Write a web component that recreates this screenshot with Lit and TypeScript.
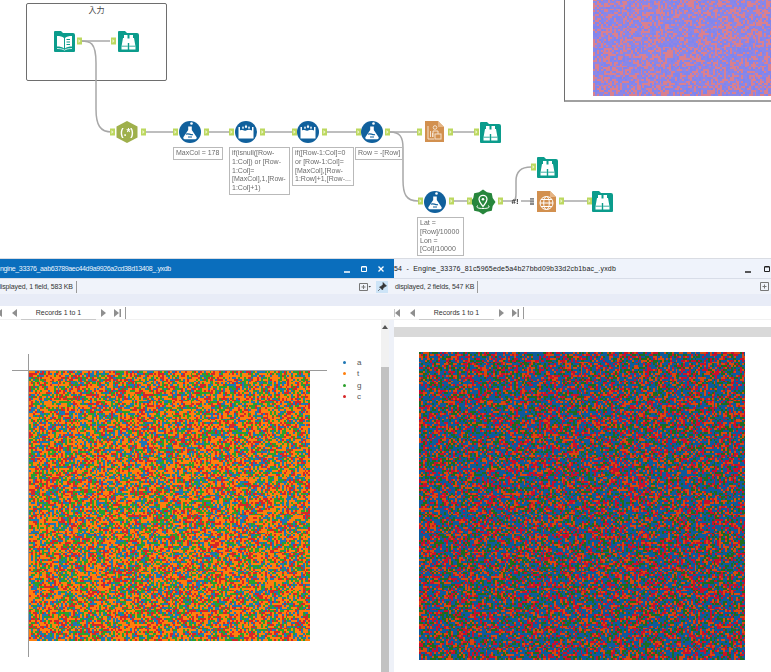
import { LitElement, css, html, svg } from 'lit'
import { customElement, property } from 'lit/decorators.js'

const SANS = '"Liberation Sans", Arial, sans-serif'

// seeded so the noise plots stay the same between runs
function rng(seed: number) {
  let s = seed
  return () => {
    s = (s * 1664525 + 1013904223) >>> 0
    return (s >>> 8) / 16777216
  }
}

@customElement('noise-plot')
class NoisePlot extends LitElement {
  @property({ type: Number }) w = 100
  @property({ type: Number }) h = 100
  @property({ type: Number }) cell = 2
  @property({ type: Number }) seed = 1
  @property({ type: Array }) colors: string[] = []

  static styles = css`
    :host { display: block; line-height: 0; }
    canvas { filter: blur(0.3px); }
  `

  updated() {
    const c = this.renderRoot.querySelector('canvas')!
    const ctx = c.getContext('2d')!
    const r = rng(this.seed)
    const cols = Math.ceil(this.w / this.cell)
    const rows = Math.ceil(this.h / this.cell)
    for (let y = 0; y < rows; y++) {
      for (let x = 0; x < cols; x++) {
        ctx.fillStyle = this.colors[Math.floor(r() * this.colors.length)]
        ctx.fillRect(Math.round(x * this.cell), Math.round(y * this.cell), Math.ceil(this.cell), Math.ceil(this.cell))
      }
    }
  }

  render() {
    return html`<canvas width=${this.w} height=${this.h}></canvas>`
  }
}

const TEAL = '#0b9c8c'
const BLUE = '#10609c'
const ORANGE = '#d2904f'
const FOLDER = 'M1 0h6l2 2h10a2 2 0 0 1 2 2v16a1 1 0 0 1-1 1H1a1 1 0 0 1-1-1V1a1 1 0 0 1 1-1z'

function anchor(x: number, y: number) {
  return svg`<rect x=${x} y=${y - 3.5} width="5" height="7" fill="#bcd85f"/><path d=${`M${x + 1.5} ${y - 2}l2 2-2 2z`} fill="#eef5cc"/>`
}

function book(x: number, y: number) {
  return svg`<g transform=${`translate(${x} ${y})`}>
    <path d=${FOLDER} fill=${TEAL}/>
    <path d="M3 5c3 0 5.500.5 7 2v10.500C8.500 16.200 6 15.600 3 15.600zM18 5c-3 0-5.500.5-7 2v10.500c1.500-1.300 4-1.900 7-1.900z" fill="#fff"/>
    <path d="M3 17.500c3 0 6 .5 7.500 1.700 1.500-1.200 4.500-1.700 7.500-1.700" fill="none" stroke="#fff" stroke-width=".8"/>
    <path d="M12.500 8.500h3.500M12.500 11h3.500M12.500 13.500h3.500" stroke=${TEAL} stroke-width="1.100"/>
  </g>`
}

function browse(x: number, y: number) {
  return svg`<g transform=${`translate(${x} ${y})`}>
    <path d=${FOLDER} fill=${TEAL}/>
    <path d="M6 4h3.500v3.500h2V4H15v3h1l1.500 8.500v3h-6.300V12h-1.400v6.500H3.500v-3L5 7h1z" fill="#fff"/>
    <path d="M3.500 15.200h6.300M11.200 15.200h6.300" stroke=${TEAL} stroke-width=".8"/>
  </g>`
}

function flask(cx: number, cy: number) {
  return svg`<g transform=${`translate(${cx} ${cy})`}>
    <circle r="11" fill=${BLUE}/>
    <circle cx="1.500" cy="-8.500" r="1.300" fill="#fff"/>
    <path d="M-1.800-5.500h3.600v3.500L6.500 5a1.500 1.500 0 0 1-1.300 2.300H-5.200A1.500 1.500 0 0 1-6.500 5L-1.800-2z" fill="#fff"/>
    <path d="M-4 2.200c2-1.500 4 1 7 .5M-2 5h4" stroke=${BLUE} stroke-width="1.200" fill="none"/>
  </g>`
}

function multiRow(cx: number, cy: number) {
  return svg`<g transform=${`translate(${cx} ${cy})`}>
    <circle r="11" fill=${BLUE}/>
    <path d="M-7.500-5h1.500v3.500c2-1.500 4 1 6 0s4-1 6 0V-5h1.500V6.500h-15z" fill="#fff"/>
    <path d="M-3-6l1 2-1 1-1-1zM0-7.500l1.300 2.500-1.300 1.300-1.300-1.300zM3-6l1 2-1 1-1-1z" fill="#fff"/>
  </g>`
}

function regex(cx: number, cy: number) {
  return svg`<g transform=${`translate(${cx} ${cy})`}>
    <path d="M0-11L10.500-5.500V5.500L0 11-10.500 5.500V-5.500z" fill="#9fb04c"/>
    <text y="3.500" text-anchor="middle" font-size="10" font-weight="700" fill="#fff" font-family=${SANS}>(.*)</text>
  </g>`
}

function doc(x: number, y: number, kind: 'report' | 'globe') {
  return svg`<g transform=${`translate(${x} ${y})`}>
    <path d="M0 0h13l6 6v15H0z" fill=${ORANGE}/>
    <path d="M13 0l6 6h-6z" fill="#e6b585"/>
    ${kind === 'globe'
      ? svg`<g fill="none" stroke="#fff" stroke-width="1"><circle cx="9.500" cy="12" r="6.500"/><ellipse cx="9.500" cy="12" rx="2.800" ry="6.500"/><path d="M3 12h13M4 8.500h11M4 15.500h11"/></g>`
      : svg`<g fill="none" stroke="#f4e2cf" stroke-width="1"><path d="M3 5v13h6M5.500 16V10M7.500 16V12"/><circle cx="10" cy="6.500" r="1.800"/><path d="M8 16v-6h5v3"/><rect x="10" y="13" width="6" height="5"/></g>`}
  </g>`
}

function spatial(cx: number, cy: number) {
  const pts: string[] = []
  for (let i = 0; i < 16; i++) {
    const a = (i * Math.PI) / 8
    const r = i % 2 ? 10.5 : 12.5
    pts.push(`${(Math.sin(a) * r).toFixed(1)},${(-Math.cos(a) * r).toFixed(1)}`)
  }
  return svg`<g transform=${`translate(${cx} ${cy})`}>
    <polygon points=${pts.join(' ')} fill="#27863c"/>
    <path d="M0 4.500c-2-3-4-4.800-4-7.200a4 4 0 0 1 8 0c0 2.400-2 4.200-4 7.200z" fill="none" stroke="#fff" stroke-width="1.300"/>
    <circle cy="-2.700" r="1.300" fill="#fff"/>
    <path d="M-5 3.500c-2 1-2 3 5 3s7-2 5-3" fill="none" stroke="#fff" stroke-width="1"/>
  </g>`
}

const WIRES = [
  'M81 41H110',
  'M81 41c9 0 15 1 15 22v46c0 16 4 23 16 23',
  'M146 132H173',
  'M208 132H229',
  'M264 132H293',
  'M326 132H357',
  'M390 132H417',
  'M390 132c10 0 13 5 13 16v32c0 14 3 21 15 21',
  'M453 132H474',
  'M452 201H468',
  'M503 201H513',
  'M513 201c3 0 3-4 3-8v-12c0-9 4-14 15-14',
  'M521 201H530',
  'M564 201H587',
]

const NOTES = [
  { left: 173, top: 147, width: 50, lines: ['MaxCol = 178'] },
  { left: 229, top: 147, width: 61, lines: ['if(isnull([Row-', '1:Col]) or [Row-', '1:Col]=', '[MaxCol],1,[Row-', '1:Col]+1)'] },
  { left: 292, top: 147, width: 62, lines: ['if([Row-1:Col]=0', 'or [Row-1:Col]=', '[MaxCol],[Row-', '1:Row]+1,[Row-...'] },
  { left: 355, top: 147, width: 48, lines: ['Row = -[Row]'] },
  { left: 417, top: 217, width: 47, lines: ['Lat =', '[Row]/10000', 'Lon =', '[Col]/10000'] },
]

@customElement('workflow-canvas')
class WorkflowCanvas extends LitElement {
  static styles = css`
    :host {
      display: block;
      position: relative;
      height: 258px;
      overflow: hidden;
      background: #fff;
    }
    svg.wires { position: absolute; left: 0; top: 0; }
    .container {
      position: absolute;
      left: 26px;
      top: 3px;
      width: 139px;
      height: 76px;
      border: 1px solid #6e6e6e;
      border-radius: 2px;
      text-align: center;
      font: 8px "Noto Sans CJK JP", sans-serif;
      color: #444;
    }
    .preview {
      position: absolute;
      left: 564px;
      top: -2px;
      width: 220px;
      height: 101px;
      border: 1px solid #6e6e6e;
      border-bottom: 2px solid #a0a0a0;
      background: #fff;
    }
    .preview noise-plot { margin-left: 28px; }
    .note {
      position: absolute;
      box-sizing: border-box;
      border: 1px solid #b9b9b9;
      background: #fff;
      padding: 1px 1px 1px 2px;
      font: 7px/8.8px "Liberation Sans", Arial, sans-serif;
      color: #6b6b6b;
      white-space: nowrap;
      overflow: hidden;
    }
    .note div { height: 8.8px; }
  `

  render() {
    return html`
      <div class="container">入力</div>
      <div class="preview">
        <noise-plot .w=${190} .h=${97} .cell=${1.9} .seed=${77} .colors=${['#7f85ee', '#d9808f', '#8488ea', '#d9808f', '#8f85e4']}></noise-plot>
      </div>
      <svg class="wires" width="771" height="258">
        ${WIRES.map((d) => svg`<path d=${d} fill="none" stroke="#a8a8a8" stroke-width="1.5"/>`)}
        ${book(54, 31)} ${browse(118, 31)}
        ${anchor(77, 41)} ${anchor(111, 41)}
        ${regex(127, 132)} ${anchor(110, 132)} ${anchor(141, 132)}
        ${flask(190, 132)} ${anchor(173, 132)} ${anchor(204, 132)}
        ${multiRow(246, 132)} ${anchor(229, 132)} ${anchor(260, 132)}
        ${multiRow(308, 132)} ${anchor(292, 132)} ${anchor(322, 132)}
        ${flask(372, 132)} ${anchor(356, 132)} ${anchor(385, 132)}
        ${doc(425, 121, 'report')} ${anchor(417, 132)} ${anchor(448, 132)}
        ${browse(480, 122)} ${anchor(474, 132)}
        ${flask(435, 202)} ${anchor(418, 201)} ${anchor(449, 201)}
        ${spatial(483, 202)} ${anchor(467, 201)} ${anchor(498, 201)}
        ${browse(537, 157)} ${anchor(531, 167)}
        ${doc(537, 191, 'globe')} ${anchor(559, 201)}
        ${browse(592, 191)} ${anchor(587, 201)}
        <text x="511.500" y="204" font-size="8" font-weight="700" fill="#333" font-family=${SANS}>#!</text>
        <rect x="530" y="198" width="4" height="7" fill="#8a8a8a"/>
        <path d="M530 200h4M530 202.500h4" stroke="#ddd" stroke-width=".6"/>
      </svg>
      ${NOTES.map((n) => html`<div class="note" style="left:${n.left}px;top:${n.top}px;width:${n.width}px">${n.lines.map((l) => html`<div>${l}</div>`)}</div>`)}
    `
  }
}

const ARROW_FIRST = svg`<path d="M1 1h1.500v8H1zM8 1v8L3 5z" fill="#8f8f8f"/>`
const ARROW_PREV = svg`<path d="M8 1v8L3 5z" fill="#8f8f8f"/>`
const ARROW_NEXT = svg`<path d="M2 1v8l5-4z" fill="#8f8f8f"/>`
const ARROW_LAST = svg`<path d="M2 1v8l5-4zM7.500 1H9v8H7.500z" fill="#8f8f8f"/>`

function pager(start: number) {
  const icon = (p: unknown, ml: number) => html`<svg style="margin-left:${ml}px" width="10" height="10" viewBox="0 0 10 10">${p}</svg>`
  return html`<div class="pager">
    ${icon(ARROW_FIRST, start)}
    ${icon(ARROW_PREV, 5)}
    <span class="records">Records 1 to 1</span>
    ${icon(ARROW_NEXT, 3)}
    ${icon(ARROW_LAST, 3)}
    <span class="sep"></span>
  </div>`
}

@customElement('app-root')
export class AppRoot extends LitElement {
  static styles = css`
    :host {
      display: block;
      width: 771px;
      height: 672px;
      overflow: hidden;
      background: #fff;
      font-family: "Liberation Sans", Arial, sans-serif;
    }
    .panes {
      display: grid;
      grid-template-columns: 394px 377px;
      height: 414px;
      overflow: hidden;
      border-top: 1px solid #d9dce3;
      box-sizing: border-box;
    }
    .win { display: flex; flex-direction: column; min-width: 0; overflow: hidden; }
    .title {
      height: 19px;
      flex: none;
      display: flex;
      align-items: center;
      font-size: 7px;
      line-height: 14px;
      white-space: nowrap;
    }
    .left .title { background: #0a6ebd; color: #eef5fc; letter-spacing: -0.36px; }
    .right .title { background: #eff3fb; color: #222; letter-spacing: 0.19px; }
    .title .name { flex: 1; overflow: hidden; }
    .title .ctl { display: flex; align-items: center; gap: 9px; margin-right: 9px; }
    .right .title .ctl { margin-right: 0; gap: 11px; }
    .ctl svg { display: block; }
    .status {
      height: 16px;
      flex: none;
      background: #f0f3fa;
      display: flex;
      align-items: center;
      font-size: 7px;
      letter-spacing: -0.12px;
      color: #333;
      white-space: nowrap;
      border-top: 1px solid #d8dde8;
      box-sizing: border-box;
    }
    .status .txt { padding-right: 3px; border-right: 1px solid #9a9a9a; line-height: 12px; }
    .left .status .txt { margin-left: -3px; }
    .right .status .txt { margin-left: 1px; }
    .status .tools { margin-left: auto; display: flex; align-items: center; gap: 5px; margin-right: 6px; }
    .right .status .tools { margin-right: 2px; }
    .band { height: 12px; flex: none; background: #e8ecf7; }
    .pager {
      height: 14px;
      flex: none;
      background: #fff;
      display: flex;
      align-items: center;
      border-bottom: 1px solid #f1f1f1;
      box-sizing: border-box;
    }
    .pager svg { flex: none; display: block; }
    .records {
      flex: none;
      width: 75px;
      margin-left: 2px;
      text-align: center;
      font-size: 7px;
      line-height: 13px;
      color: #333;
      box-shadow: 0 1px 0 #c9c9c9;
    }
    .pager .sep { flex: none; width: 1px; height: 12px; background: #9a9a9a; margin-left: 3px; }

    .left .body { flex: 1; display: flex; min-height: 0; }
    .chart { flex: none; width: 381px; position: relative; }
    .vaxis { position: absolute; left: 28px; top: 34px; width: 1px; height: 303px; background: #9a9a9a; }
    .haxis { position: absolute; left: 12px; top: 50px; width: 315px; height: 1px; background: #9a9a9a; }
    .chart noise-plot { position: absolute; left: 29px; top: 51px; }
    .legend {
      position: absolute;
      left: 343px;
      top: 37px;
      display: grid;
      grid-template-columns: 3px auto;
      column-gap: 11px;
      align-items: center;
      font-size: 8px;
      line-height: 11.3px;
      color: #555;
    }
    .legend i { width: 3px; height: 3px; border-radius: 50%; }
    .scroll { flex: none; width: 8px; background: #f1f1f1; display: flex; flex-direction: column; }
    .scroll .up { height: 47px; flex: none; display: flex; justify-content: center; padding-top: 5px; box-sizing: border-box; }
    .scroll .thumb { flex: 1; background: #c2c2c2; }
    .gutter { flex: none; width: 5px; background: #eef1f8; }

    .right .plate { flex: 1; display: flex; flex-direction: column; }
    .right .gray { height: 10px; flex: none; margin-top: 7px; background: #d9d9d9; }
    .right noise-plot { margin: 15px 0 0 25px; }
  `

  render() {
    return html`
      <workflow-canvas></workflow-canvas>
      <div class="panes">
        <div class="win left">
          <div class="title">
            <span class="name">ngine_33376_aab63789aec44d9a9926a2cd38d13408_.yxdb</span>
            <span class="ctl">
              <svg width="8" height="8" viewBox="0 0 8 8"><path d="M1 7h6" stroke="#fff" stroke-width="1.5"/></svg>
              <svg width="8" height="8" viewBox="0 0 8 8"><path d="M1.500 2h5v4.500h-5z" fill="none" stroke="#fff" stroke-width="1"/><path d="M1.500 1.500h5" stroke="#fff"/></svg>
              <svg width="8" height="8" viewBox="0 0 8 8"><path d="M1.500 1.500l5 5M6.500 1.500l-5 5" stroke="#fff" stroke-width="1.3"/></svg>
            </span>
          </div>
          <div class="status">
            <span class="txt">displayed, 1 field, 583 KB</span>
            <span class="tools">
              <svg width="12" height="10" viewBox="0 0 12 10"><path d="M.5 1.500h8v7h-8zM2.500 5h4M4.500 3v4" fill="none" stroke="#777"/><path d="M9.500 4h2.500l-1.250 1.500z" fill="#444"/></svg>
              <svg width="12" height="12" viewBox="0 0 12 12"><rect width="12" height="12" fill="#cde4f7"/><path d="M7 1.500l3.500 3.500-1.500.5-2 2-.5 1.500-3-3 1.500-.5 2-2zM4 8l-2 2" fill="#333" stroke="#333" stroke-width=".6"/></svg>
            </span>
          </div>
          <div class="band"></div>
          ${pager(-6)}
          <div class="body">
            <div class="chart">
              <div class="vaxis"></div>
              <div class="haxis"></div>
              <noise-plot .w=${281} .h=${270} .cell=${1.9} .seed=${11} .colors=${['#1f77b4', '#ff7f0e', '#2ca02c', '#d62728', '#ff7f0e']}></noise-plot>
              <div class="legend">
                <i style="background:#1f77b4"></i><span>a</span>
                <i style="background:#ff7f0e"></i><span>t</span>
                <i style="background:#2ca02c"></i><span>g</span>
                <i style="background:#d62728"></i><span>c</span>
              </div>
            </div>
            <div class="scroll">
              <div class="up"><svg width="6" height="4" viewBox="0 0 6 4"><path d="M3 0l3 4H0z" fill="#555"/></svg></div>
              <div class="thumb"></div>
            </div>
            <div class="gutter"></div>
          </div>
        </div>
        <div class="win right">
          <div class="title">
            <span class="name">54&nbsp; -&nbsp; Engine_33376_81c5965ede5a4b27bbd09b33d2cb1bac_.yxdb</span>
            <span class="ctl">
              <svg width="8" height="8" viewBox="0 0 8 8"><path d="M1 7h6" stroke="#222" stroke-width="1.5"/></svg>
              <svg width="8" height="8" viewBox="0 0 8 8"><path d="M1.500 2h5v4.500h-5z" fill="none" stroke="#222" stroke-width="1"/><path d="M1.500 1.500h5" stroke="#222"/></svg>
            </span>
          </div>
          <div class="status">
            <span class="txt">displayed, 2 fields, 547 KB</span>
            <span class="tools">
              <svg width="9" height="9" viewBox="0 0 9 9"><path d="M.5.5h8v8h-8zM2.500 4.500h4M4.500 2.500v4" fill="none" stroke="#777"/></svg>
            </span>
          </div>
          <div class="band"></div>
          ${pager(-2)}
          <div class="plate">
            <div class="gray"></div>
            <noise-plot .w=${326} .h=${308} .cell=${1.9} .seed=${29} .colors=${['#0f5a9c', '#1f6b1f', '#c8102e', '#d9480f', '#0f5a9c']}></noise-plot>
          </div>
        </div>
      </div>
    `
  }
}
